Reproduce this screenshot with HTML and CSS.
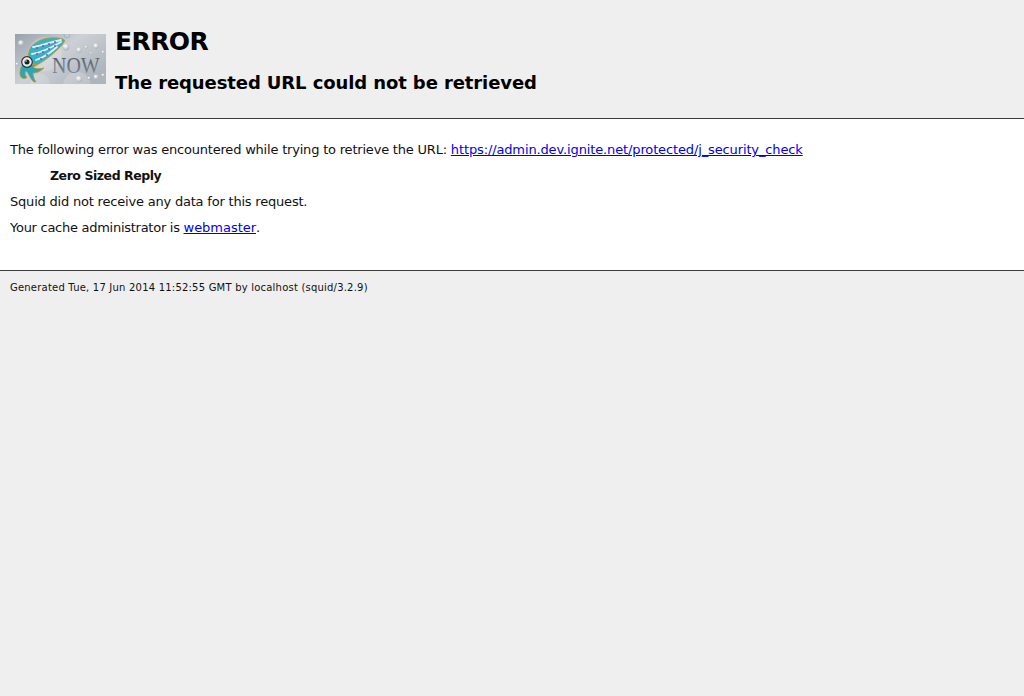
FILE: index.html
```html
<!DOCTYPE html>
<html lang="en">
<head>
<meta charset="utf-8">
<title>ERROR: The requested URL could not be retrieved</title>
<link rel="stylesheet" href="styles.css">
</head>
<body>
<header class="titles">
<svg class="logo" width="91" height="50" viewBox="0 0 91 50" aria-label="Squid Now">
  <defs>
    <linearGradient id="bg" x1="0" y1="0" x2="1" y2="0.7">
      <stop offset="0" stop-color="#98a1ab"/>
      <stop offset="0.5" stop-color="#cdd1d6"/>
      <stop offset="1" stop-color="#aeb4bc"/>
    </linearGradient>
    <radialGradient id="bub" cx="0.4" cy="0.35" r="0.7">
      <stop offset="0" stop-color="#fff"/>
      <stop offset="1" stop-color="#a3abb5"/>
    </radialGradient>
    <linearGradient id="now" x1="0" y1="0" x2="0" y2="1">
      <stop offset="0" stop-color="#46515f"/>
      <stop offset="1" stop-color="#8a94a0"/>
    </linearGradient>
  </defs>
  <rect width="91" height="50" fill="url(#bg)"/>
  <circle cx="30" cy="20" r="17" fill="#fff" opacity="0.16"/>
  <circle cx="62" cy="52" r="14" fill="#fff" opacity="0.2"/>
  <circle cx="25" cy="50" r="10" fill="#fff" opacity="0.15"/>
  <circle cx="6" cy="9" r="2.8" fill="url(#bub)"/>
  <circle cx="51" cy="13" r="3.4" fill="url(#bub)"/>
  <circle cx="64" cy="16" r="2.8" fill="url(#bub)"/>
  <circle cx="81" cy="12" r="2.8" fill="url(#bub)"/>
  <circle cx="71" cy="13" r="1.4" fill="url(#bub)"/>
  <circle cx="88" cy="18" r="1.4" fill="url(#bub)"/>
  <circle cx="76" cy="19" r="1" fill="url(#bub)"/>
  <circle cx="52" cy="1" r="3" fill="none" stroke="#8fb4bd" stroke-width="0.8"/>
  <circle cx="64" cy="45" r="3.2" fill="url(#bub)"/>
  <circle cx="74" cy="44" r="1.6" fill="url(#bub)"/>
  <circle cx="81" cy="43" r="2.4" fill="url(#bub)"/>
  <circle cx="88" cy="41" r="1.6" fill="url(#bub)"/>
  <circle cx="2" cy="30" r="1.4" fill="url(#bub)"/>
  <path d="M13 23 C14 17 15 13 18 11 C24 6 30 4 35 4 C40 3.5 45 4 48 5 C50 6 50 7.5 49 8 C47 12 44 14 42 16 C36 22 29 27 22 31 C17 30 14 27 13 23 Z" fill="#30b4c6" stroke="#c9941f" stroke-width="0.9"/>
  <g fill="none" stroke="#e6ebf4" stroke-width="1.8" stroke-linecap="round">
    <path d="M18 13 C24 12 32 9 46 6"/>
    <path d="M17 20 C24 19 34 15 46 8"/>
    <path d="M21 26 C28 24 35 19 42 13"/>
  </g>
  <g fill="#a53aaa">
    <circle cx="22" cy="14" r="0.9"/><circle cx="28" cy="12" r="0.9"/><circle cx="34" cy="10" r="0.9"/><circle cx="40" cy="8" r="0.9"/>
    <circle cx="22" cy="20" r="0.9"/><circle cx="28" cy="18" r="0.9"/><circle cx="34" cy="15" r="0.9"/><circle cx="40" cy="12" r="0.9"/>
    <circle cx="26" cy="25" r="0.9"/><circle cx="32" cy="21" r="0.9"/>
  </g>
  <path d="M8 30 C5 34 4 40 6 43 C8 45 11 45 12 43 C10 42 9.5 39 11 37 C13 38 14 42 17 46 C18 48 20 48 21 48 C19 45 18 42 18 39 C21 39 25 38 29 34 C25 35 20 35 18 33 L22 31 L14 30 Z" fill="#2aa6bb" stroke="#c9941f" stroke-width="0.8"/>
  <circle cx="12" cy="28" r="5.3" fill="#ececec" stroke="#33332a" stroke-width="1.2"/>
  <circle cx="12" cy="28" r="2.5" fill="#1e1e1e"/>
  <circle cx="11" cy="27" r="0.8" fill="#fff"/>
  <text class="logo-now" transform="translate(37 39) scale(1 1.2)">NOW</text>
</svg>
<div class="heads">
<h1>ERROR</h1>
<h2>The requested URL could not be retrieved</h2>
</div>
</header>
<main class="content">
<p>The following error was encountered while trying to retrieve the URL: <a class="url" href="#">https://admin.dev.ignite.net/protected/j_security_check</a></p>
<blockquote>Zero Sized Reply</blockquote>
<p>Squid did not receive any data for this request.</p>
<p class="admin">Your cache administrator is <a href="#">webmaster</a>.</p>
</main>
<footer class="footer">Generated Tue, 17 Jun 2014 11:52:55 GMT by localhost (squid/3.2.9)</footer>
</body>
</html>
```

FILE: styles.css
```css
html, body {
  margin: 0;
  padding: 0;
  background: #efefef;
  color: #000;
  font-family: "DejaVu Sans", sans-serif;
}
.titles {
  display: flex;
  align-items: flex-start;
  height: 118px;
  box-sizing: border-box;
  padding: 26px 0 0 15px;
  background: #efefef;
}
.logo {
  display: block;
  margin-top: 8px;
  margin-right: 9px;
  flex: none;
}
.logo-now {
  font-family: "Liberation Serif", serif;
  font-size: 20px;
  fill: url(#now);
}
.heads { display: flex; flex-direction: column; }
h1 {
  margin: 0;
  font-size: 25px;
  line-height: 32px;
  font-weight: bold;
  letter-spacing: -0.6px;
}
h2 {
  margin: 13px 0 0;
  font-size: 18px;
  line-height: 24px;
  font-weight: bold;
  letter-spacing: -0.1px;
}
.content {
  background: #fff;
  border-top: 1px solid #3c3c3c;
  border-bottom: 1px solid #3c3c3c;
  height: 151px;
  padding: 0 10px;
  font-size: 13px;
  line-height: 16px;
  letter-spacing: -0.2px;
  color: #111;
}
.content p { margin: 0 0 10px; }
.content p:first-child { padding-top: 23px; }
.content .url { letter-spacing: -0.13px; }
.content .admin { letter-spacing: -0.27px; }
.content .admin a { letter-spacing: -0.03px; }
blockquote {
  margin: 0 0 10px 40px;
  font-size: 12.5px;
  font-weight: bold;
  letter-spacing: -0.45px;
}
a { color: #0000ee; }
.footer {
  padding: 10px 10px 0;
  font-size: 10px;
  line-height: 13px;
  letter-spacing: 0.21px;
  color: #111;
}
```
